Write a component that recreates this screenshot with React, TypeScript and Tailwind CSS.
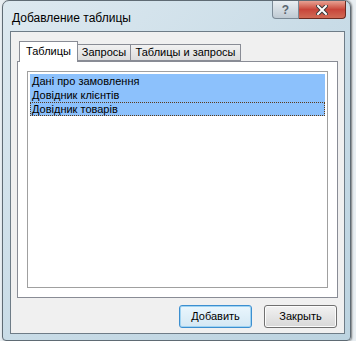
import React from "react";

const font = { fontFamily: '"Liberation Sans", Arial, sans-serif' };

export default function App() {
  return (
    <div className="w-[356px] h-[341px] bg-[#e8eef2] relative overflow-hidden" style={font}>
      {/* window */}
      <div className="absolute left-[2px] top-0 w-[349px] h-[341px] rounded-t-[7px] rounded-b-[4px] border border-[#5f6b74] bg-gradient-to-br from-[#dde9f0] via-[#c9dce7] to-[#bcd3e0] flex flex-col shadow-[1px_0_2px_rgba(0,0,0,0.5)]">
        {/* title bar */}
        <div className="h-[30px] flex items-start justify-between">
          <div className="pl-[9px] pt-[10px] text-[12px] leading-[15px] text-black">Добавление таблицы</div>
          <div className="flex mr-[4px]">
            <div className="w-[27px] h-[18px] rounded-bl-[4px] border border-t-0 border-[#7b8a96] bg-gradient-to-b from-[#e8eef2] to-[#bfcad3] flex items-center justify-center text-[12px] font-bold text-[#5a6670] leading-none">?</div>
            <div className="w-[47px] h-[18px] rounded-br-[4px] border border-t-0 border-l-0 border-[#6b2a20] bg-gradient-to-b from-[#e7a193] via-[#c8453a] to-[#d06a55] flex items-center justify-center">
              <svg width="12" height="10" viewBox="0 0 12 10">
                <path d="M2 1 L10 9 M10 1 L2 9" stroke="#3a3a3a" strokeWidth="4" strokeLinecap="square" />
                <path d="M2 1 L10 9 M10 1 L2 9" stroke="#ffffff" strokeWidth="2" strokeLinecap="square" />
              </svg>
            </div>
          </div>
        </div>
        {/* client */}
        <div className="ml-[7px] mr-[5px] h-[303px] border border-[#6e7c87] bg-[#f0f0f0] flex flex-col">
          <div className="pl-[6px] pr-[6px] pt-[10px] flex flex-col">
            {/* tabs */}
            <div className="flex items-end h-[19px] pl-[2px]">
              <div className="relative z-10 w-[59px] h-[21px] -mb-[1px] border border-b-0 border-[#898c95] bg-white text-[11px] leading-[19px] text-black text-center">Таблицы</div>
              <div className="w-[53px] h-[17px] border border-l-0 border-[#898c95] bg-gradient-to-b from-[#f2f2f2] to-[#dcdcdc] text-[11px] leading-[15px] text-black text-center">Запросы</div>
              <div className="w-[110px] h-[17px] border border-l-0 border-[#898c95] bg-gradient-to-b from-[#f2f2f2] to-[#dcdcdc] text-[11px] leading-[15px] text-black text-center">Таблицы и запросы</div>
            </div>
            {/* panel */}
            <div className="h-[237px] border border-[#898c95] bg-white px-[9px] pt-[9px]">
              <div className="h-[217px] border border-[#a0a0a0] bg-white pt-[2px] px-[2px]">
                <div className="bg-[#8cc1fc] text-[11px] leading-[14px] text-black pl-[2px]">
                  <div className="h-[14px]">Дані про замовлення</div>
                  <div className="h-[14px]">Довідник клієнтів</div>
                  <div className="h-[14px] border border-dotted border-[#5a3a1a] -ml-[2px] pl-[1px] leading-[12px]">Довідник товарів</div>
                </div>
              </div>
            </div>
          </div>
          {/* buttons */}
          <div className="flex justify-end gap-[12px] pr-[7px] pt-[7px]">
            <div className="w-[73px] h-[23px] rounded-[3px] border border-[#3c8fd0] bg-gradient-to-b from-[#eaf6fd] to-[#d4e8f4] shadow-[inset_0_0_0_1px_#9fd3f2] flex items-center justify-center text-[11px] text-black">Добавить</div>
            <div className="w-[73px] h-[23px] rounded-[3px] border border-[#707070] bg-gradient-to-b from-[#f2f2f2] to-[#d8d8d8] shadow-[inset_0_0_0_1px_#fcfcfc] flex items-center justify-center text-[11px] text-black">Закрыть</div>
          </div>
        </div>
      </div>
    </div>
  );
}
